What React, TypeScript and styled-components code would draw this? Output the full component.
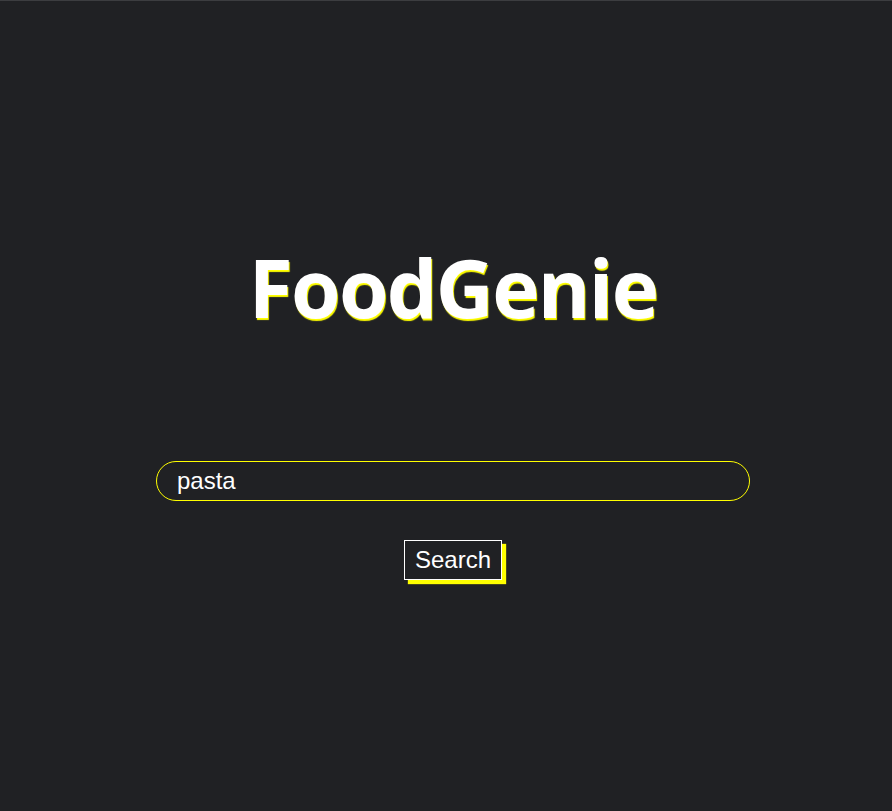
import styled, { createGlobalStyle } from "styled-components";

const GlobalStyle = createGlobalStyle`
  html, body {
    margin: 0;
    padding: 0;
    background: #202124;
  }
  body {
    border-top: 1px solid #3c3d40;
  }
`;

const Page = styled.main`
  min-height: 810px;
  padding-left: 14px;
  display: flex;
  flex-direction: column;
  align-items: center;
  background: #202124;
  font-family: "Liberation Sans", Arial, sans-serif;
`;

const Title = styled.h1`
  margin: 231px 0 0;
  font-family: "Open Sans", "Noto Sans", sans-serif;
  font-weight: 700;
  font-size: 80px;
  line-height: 110px;
  letter-spacing: -1.6px;
  color: #ffffff;
  text-shadow: 1px 2px 1px #ffff00;
`;

const SearchForm = styled.form`
  margin-top: 119px;
  display: flex;
  flex-direction: column;
  align-items: center;
  gap: 39px;
`;

const SearchInput = styled.input`
  box-sizing: border-box;
  width: 594px;
  height: 40px;
  padding: 0 20px;
  border: 1px solid #ffff00;
  border-radius: 20px;
  background: transparent;
  color: #ffffff;
  font-family: "Liberation Sans", Arial, sans-serif;
  font-size: 24px;
  outline: none;
`;

const SearchButton = styled.button`
  box-sizing: border-box;
  height: 40px;
  padding: 0 10px;
  border: 1px solid #ffffff;
  background: #202124;
  color: #ffffff;
  font-family: "Liberation Sans", Arial, sans-serif;
  font-size: 24px;
  box-shadow: 4px 4px 1px #ffff00;
  cursor: pointer;
`;

export default function App() {
  return (
    <>
      <GlobalStyle />
      <Page>
        <Title>FoodGenie</Title>
        <SearchForm onSubmit={(e) => e.preventDefault()}>
          <SearchInput type="text" defaultValue="pasta" />
          <SearchButton type="submit">Search</SearchButton>
        </SearchForm>
      </Page>
    </>
  );
}
